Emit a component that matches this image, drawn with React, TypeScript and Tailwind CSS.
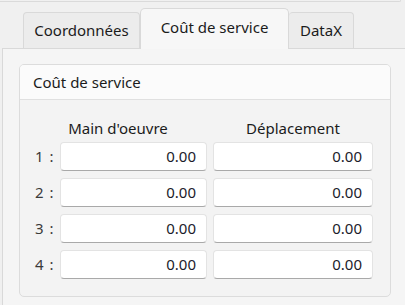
const font = { fontFamily: '"Noto Sans", "Open Sans", sans-serif' };

const rows = ["1", "2", "3", "4"];

function Field({ value, width }: { value: string; width: string }) {
  return (
    <div
      className={`${width} h-[29px] flex items-center justify-end pr-[10px] bg-white rounded-[4px] border border-[#e3e3e3] border-b-[#a9a9a9] text-[15px] text-[#1b1b2b]`}
    >
      {value}
    </div>
  );
}

export default function App() {
  return (
    <div
      className="w-[405px] h-[305px] overflow-hidden bg-[#f0f0f0] text-[#1b1b1b]"
      style={font}
    >
      <div className="h-[2px] w-[401px] border-b border-r border-[#dadada] rounded-br-[4px]" />

      {/* tabs */}
      <div className="flex items-end h-[46px] pl-[23px] relative z-10">
        <div className="w-[117px] h-[36px] flex items-center justify-center border border-b-0 border-[#d9d9d9] rounded-t-[4px] bg-[#ececec] text-[15px]">
          Coordonnées
        </div>
        <div className="w-[149px] h-[41px] -mb-[1px] flex items-center justify-center pb-[4px] border border-b-0 border-[#d9d9d9] rounded-t-[5px] bg-[#f7f7f7] text-[15px]">
          Coût de service
        </div>
        <div className="w-[65px] h-[36px] flex items-center justify-center border border-b-0 border-l-0 border-[#d9d9d9] rounded-t-[4px] bg-[#ececec] text-[15px]">
          DataX
        </div>
      </div>

      {/* pane */}
      <div className="ml-[2px] h-[260px] border-t border-l border-[#d9d9d9] bg-[#f5f5f5] pt-[15px] pl-[16px]">
        <div className="w-[372px] h-[233px] border border-[#dcdcdc] rounded-[5px] bg-[#f3f3f3] overflow-hidden">
          <div className="h-[35px] flex items-center pl-[13px] bg-[#fbfbfb] border-b border-[#e0e0e0] text-[15px]">
            Coût de service
          </div>
          <div className="pl-[15px] pt-[18px]">
            <div className="flex h-[20px] items-center text-[15px]">
              <div className="w-[33px]" />
              <div className="w-[100px] text-center">Main d'oeuvre</div>
              <div className="w-[45px]" />
              <div className="w-[160px] text-center">Déplacement</div>
            </div>
            <div className="flex flex-col gap-[7px] mt-[4px]">
              {rows.map((r) => (
                <div key={r} className="flex items-center">
                  <div className="w-[25px] text-[15px] text-[#3a3a3a] tracking-[1px]">
                    {r} :
                  </div>
                  <Field value="0.00" width="w-[147px]" />
                  <div className="w-[6px]" />
                  <Field value="0.00" width="w-[160px]" />
                </div>
              ))}
            </div>
          </div>
        </div>
      </div>
    </div>
  );
}
